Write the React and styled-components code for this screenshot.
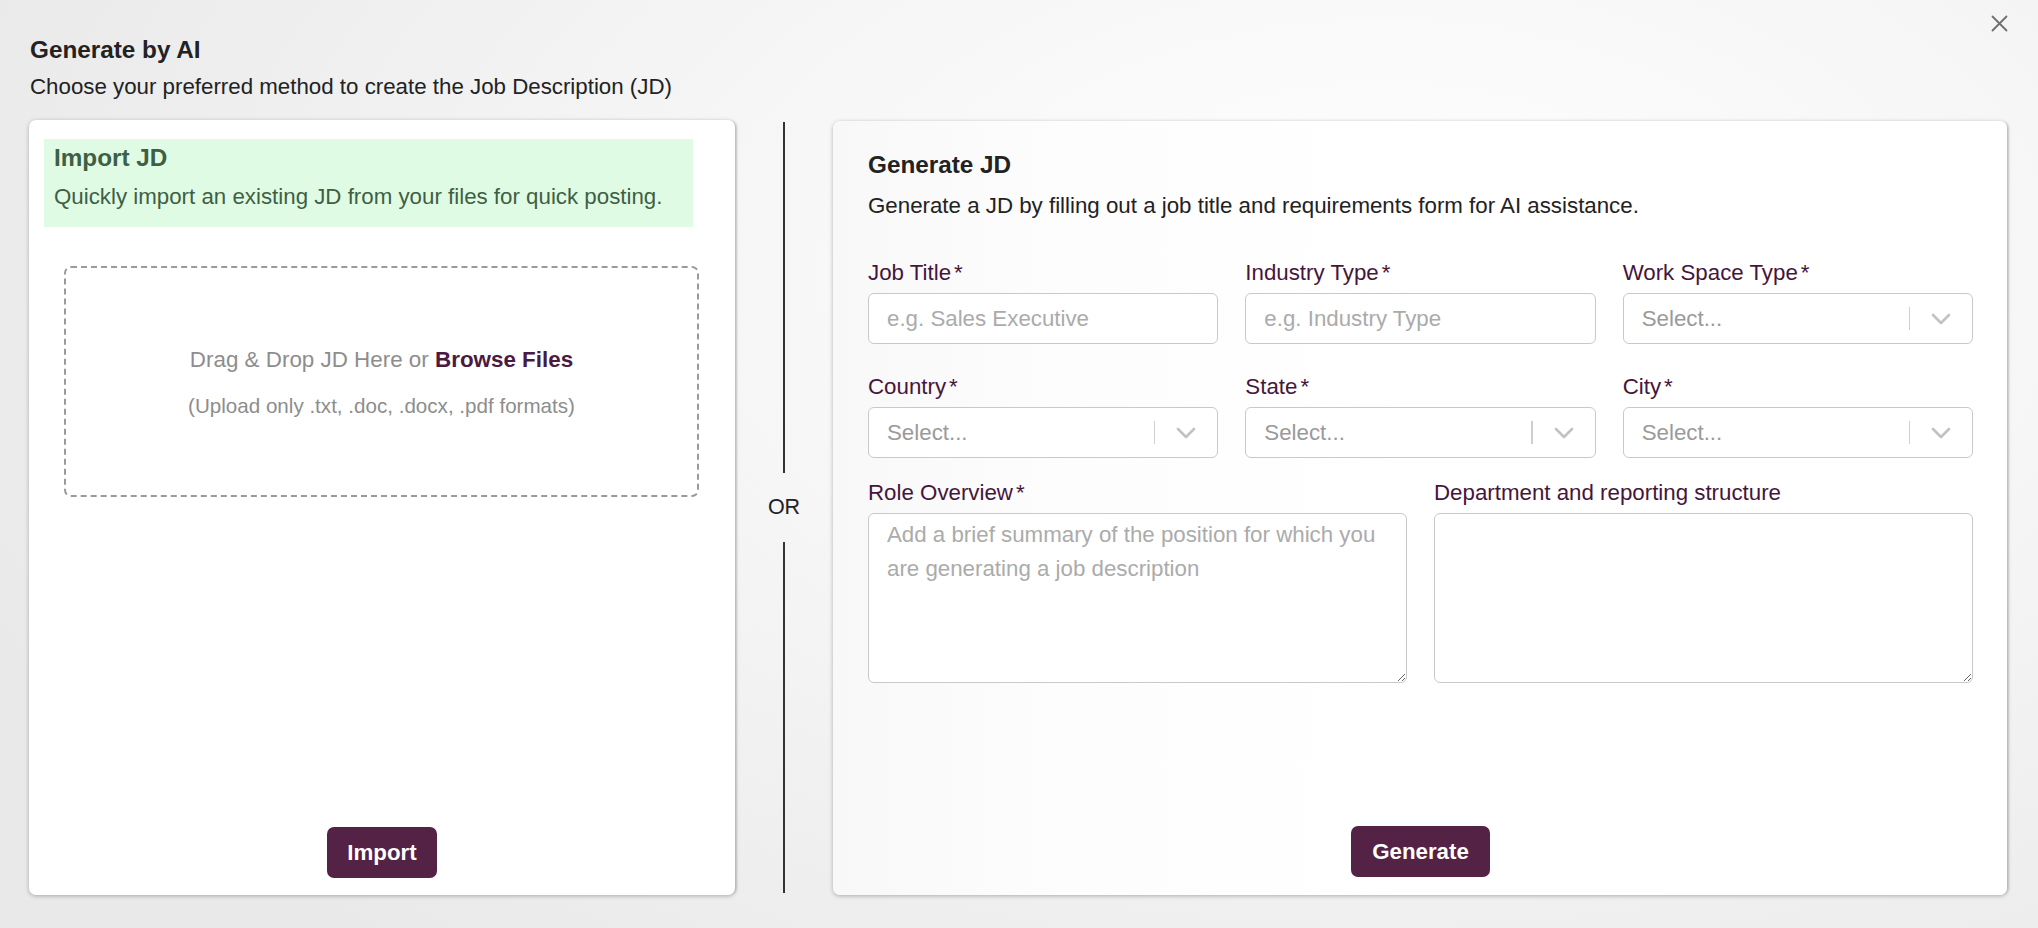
import React from "react";
import styled, { createGlobalStyle } from "styled-components";

const BODY = 22.3;
const HEAD = 24.3;

const Global = createGlobalStyle`
  html, body { margin: 0; padding: 0; }
  body {
    width: 2038px;
    height: 928px;
    overflow: hidden;
    font-family: "Liberation Sans", Arial, Helvetica, sans-serif;
    background: radial-gradient(ellipse 75% 95% at 68% 30%, #ffffff 0%, #f6f6f6 45%, #e9e9e9 100%);
    color: #222;
  }
  * { box-sizing: border-box; }
`;

const Modal = styled.div`
  position: relative;
  height: 928px;
  padding: 36px 31px 0 29px;
  display: flex;
  flex-direction: column;
`;

const Close = styled.button`
  position: absolute;
  top: 13px;
  right: 29px;
  width: 20px;
  height: 20px;
  padding: 0;
  border: 0;
  background: none;
  display: flex;
  align-items: center;
  justify-content: center;
  cursor: pointer;
`;

const Header = styled.div`
  padding-left: 1px;
`;

const Title = styled.h1`
  margin: 0;
  font-size: ${HEAD}px;
  line-height: 28px;
  font-weight: 700;
  color: #222;
`;

const Subtitle = styled.p`
  margin: 10px 0 0;
  font-size: ${BODY}px;
  line-height: 26px;
  color: #222;
`;

const Row = styled.div`
  display: flex;
  margin-top: 20px;
  height: 775px;
`;

const Card = styled.div`
  background: #fff;
  border-radius: 7px;
  box-shadow: 0 1px 4px rgba(0, 0, 0, 0.28), 3px 0 2px -1px rgba(0, 0, 0, 0.12);
  display: flex;
  flex-direction: column;
`;

const ImportCard = styled(Card)`
  width: 706px;
  flex: none;
`;

const GenerateCard = styled(Card)`
  flex: 1;
  margin-top: 1px;
  padding: 30px 34px 18px 35px;
  background: linear-gradient(to right, #f8f8f8 0%, #fdfdfd 20%, #ffffff 50%);
`;

const Banner = styled.div`
  margin: 19px 42px 0 15px;
  padding: 5px 10px 17px;
  background: #e0fbe4;
  color: #3f5f44;
`;

const BannerTitle = styled.h2`
  margin: 0;
  font-size: ${HEAD}px;
  line-height: 28px;
  font-weight: 700;
`;

const BannerText = styled.p`
  margin: 12px 0 0;
  font-size: ${BODY}px;
  line-height: 26px;
`;

const DropZone = styled.div`
  margin: 39px 36px 0 35px;
  height: 231px;
  border: 2px dashed #9a9a9a;
  border-radius: 7px;
  display: flex;
  flex-direction: column;
  align-items: center;
  justify-content: center;
  color: #8d8d8d;
`;

const DropMain = styled.div`
  font-size: 22.4px;
  line-height: 26px;
  margin-top: 3px;
`;

const Browse = styled.span`
  font-weight: 700;
  color: #4b1a40;
`;

const DropHint = styled.div`
  margin-top: 20px;
  font-size: 20.6px;
  line-height: 26px;
`;

const Actions = styled.div`
  margin-top: auto;
  display: flex;
  justify-content: center;
  padding-bottom: ${(p) => p.$pb ?? 17}px;
`;

const PrimaryButton = styled.button`
  height: 51px;
  padding: 0 ${(p) => p.$px ?? 20}px;
  border: 0;
  border-radius: 7px;
  background: #532245;
  color: #fff;
  font-family: "Liberation Sans", Arial, sans-serif;
  font-size: ${BODY}px;
  font-weight: 700;
  cursor: pointer;
`;

const Divider = styled.div`
  width: 98px;
  flex: none;
  display: flex;
  flex-direction: column;
  align-items: center;
  padding: 2px 0 2px;
`;

const Rule = styled.div`
  flex: 1;
  width: 1.3px;
  background: #333;
`;

const OrText = styled.div`
  margin: 21px 0 22px;
  font-size: 21.5px;
  line-height: 26px;
  color: #222;
`;

const CardTitle = styled.h2`
  margin: 0;
  font-size: ${HEAD}px;
  line-height: 28px;
  font-weight: 700;
  color: #222;
`;

const CardText = styled.p`
  margin: 14px 0 0;
  font-size: ${BODY}px;
  line-height: 26px;
  color: #222;
`;

const Grid = styled.div`
  display: grid;
  grid-template-columns: repeat(${(p) => p.$cols}, 1fr);
  column-gap: 27px;
  row-gap: 30px;
  margin-top: ${(p) => p.$mt}px;
`;

const Field = styled.div`
  display: flex;
  flex-direction: column;
  min-width: 0;
`;

const Label = styled.label`
  font-size: ${BODY}px;
  line-height: 26px;
  color: #45163b;
  margin-bottom: 7px;
`;

const Req = styled.span`
  margin-left: 3px;
`;

const Input = styled.input`
  height: 51px;
  width: 100%;
  border: 1.5px solid #c9c9c9;
  border-radius: 6px;
  padding: 0 18px;
  font-family: "Liberation Sans", Arial, sans-serif;
  font-size: ${BODY}px;
  color: #222;
  background: #fff;
  outline: none;
  &::placeholder { color: #ababab; }
`;

const SelectBox = styled.div`
  height: 51px;
  border: 1.5px solid #c9c9c9;
  border-radius: 6px;
  background: #fff;
  display: flex;
  align-items: center;
  padding-left: 18px;
  font-size: ${BODY}px;
  color: #9a9a9a;
`;

const SelectValue = styled.span`
  flex: 1;
`;

const Sep = styled.span`
  width: 1.5px;
  height: 23px;
  background: #cfcfcf;
`;

const Chevron = styled.span`
  width: 62px;
  display: flex;
  align-items: center;
  justify-content: center;
`;

const TextArea = styled.textarea`
  height: 170px;
  width: 100%;
  border: 1.5px solid #c9c9c9;
  border-radius: 6px;
  padding: 4px 18px;
  font-family: "Liberation Sans", Arial, sans-serif;
  font-size: ${BODY}px;
  line-height: 33.8px;
  color: #222;
  background: #fff;
  outline: none;
  resize: vertical;
  &::placeholder { color: #ababab; }
`;

function Select() {
  return (
    <SelectBox>
      <SelectValue>Select...</SelectValue>
      <Sep />
      <Chevron>
        <svg width="20" height="12" viewBox="0 0 20 12" fill="none">
          <path d="M2 2l8 8 8-8" stroke="#c2c2c2" strokeWidth="2.6" strokeLinecap="round" strokeLinejoin="round" />
        </svg>
      </Chevron>
    </SelectBox>
  );
}

function FieldLabel({ children, required }) {
  return (
    <Label>
      {children}
      {required && <Req>*</Req>}
    </Label>
  );
}

export default function App() {
  return (
    <>
      <Global />
      <Modal>
        <Close aria-label="Close">
          <svg width="17" height="17" viewBox="0 0 17 17">
            <path d="M1.5 1.5l14 14M15.5 1.5l-14 14" stroke="#6f6f6f" strokeWidth="1.8" strokeLinecap="round" />
          </svg>
        </Close>
        <Header>
          <Title>Generate by AI</Title>
          <Subtitle>Choose your preferred method to create the Job Description (JD)</Subtitle>
        </Header>
        <Row>
          <ImportCard>
            <Banner>
              <BannerTitle>Import JD</BannerTitle>
              <BannerText>Quickly import an existing JD from your files for quick posting.</BannerText>
            </Banner>
            <DropZone>
              <DropMain>
                Drag &amp; Drop JD Here or <Browse>Browse Files</Browse>
              </DropMain>
              <DropHint>(Upload only .txt, .doc, .docx, .pdf formats)</DropHint>
            </DropZone>
            <Actions $pb={17}>
              <PrimaryButton $px={20}>Import</PrimaryButton>
            </Actions>
          </ImportCard>

          <Divider>
            <Rule />
            <OrText>OR</OrText>
            <Rule />
          </Divider>

          <GenerateCard>
            <CardTitle>Generate JD</CardTitle>
            <CardText>Generate a JD by filling out a job title and requirements form for AI assistance.</CardText>
            <Grid $cols={3} $mt={41}>
              <Field>
                <FieldLabel required>Job Title</FieldLabel>
                <Input placeholder="e.g. Sales Executive" />
              </Field>
              <Field>
                <FieldLabel required>Industry Type</FieldLabel>
                <Input placeholder="e.g. Industry Type" />
              </Field>
              <Field>
                <FieldLabel required>Work Space Type</FieldLabel>
                <Select />
              </Field>
              <Field>
                <FieldLabel required>Country</FieldLabel>
                <Select />
              </Field>
              <Field>
                <FieldLabel required>State</FieldLabel>
                <Select />
              </Field>
              <Field>
                <FieldLabel required>City</FieldLabel>
                <Select />
              </Field>
            </Grid>
            <Grid $cols={2} $mt={22}>
              <Field>
                <FieldLabel required>Role Overview</FieldLabel>
                <TextArea placeholder={"Add a brief summary of the position for which you\nare generating a job description"} />
              </Field>
              <Field>
                <FieldLabel>Department and reporting structure</FieldLabel>
                <TextArea />
              </Field>
            </Grid>
            <Actions $pb={0}>
              <PrimaryButton $px={21}>Generate</PrimaryButton>
            </Actions>
          </GenerateCard>
        </Row>
      </Modal>
    </>
  );
}
